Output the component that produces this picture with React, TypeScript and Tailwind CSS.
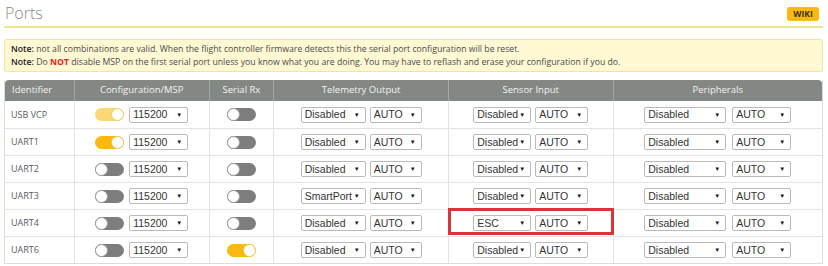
import React from "react";

const SANS = "font-['Open_Sans',sans-serif]";
const ARIAL = "font-['Liberation_Sans',Arial,sans-serif]";

type Row = {
  id: string;
  msp: "on" | "off" | "locked";
  rx: boolean;
  telemetry: string;
  sensor: string;
  highlight?: boolean;
};

const ROWS: Row[] = [
  { id: "USB VCP", msp: "locked", rx: false, telemetry: "Disabled", sensor: "Disabled" },
  { id: "UART1", msp: "on", rx: false, telemetry: "Disabled", sensor: "Disabled" },
  { id: "UART2", msp: "off", rx: false, telemetry: "Disabled", sensor: "Disabled" },
  { id: "UART3", msp: "off", rx: false, telemetry: "SmartPort", sensor: "Disabled" },
  { id: "UART4", msp: "off", rx: false, telemetry: "Disabled", sensor: "ESC", highlight: true },
  { id: "UART6", msp: "off", rx: true, telemetry: "Disabled", sensor: "Disabled" },
];

function Toggle({ state }: { state: "on" | "off" | "locked" }) {
  if (state === "off") {
    return (
      <div className="relative h-[13px] w-[29px] shrink-0 rounded-full bg-[#7d7d7d]">
        <div className="absolute left-0 top-0 h-[13px] w-[13px] rounded-full border border-[#9a9a9a] bg-white" />
      </div>
    );
  }
  return (
    <div
      className={`relative h-[13px] w-[29px] shrink-0 rounded-full ${
        state === "on" ? "bg-[#fbb80f]" : "bg-[#fbd873]"
      }`}
    >
      <div className="absolute right-0 top-0 h-[13px] w-[13px] rounded-full border border-[#f0c860] bg-white" />
    </div>
  );
}

function Select({ value, w }: { value: string; w: string }) {
  return (
    <div
      className={`${w} ${ARIAL} flex h-[16px] shrink-0 items-center justify-between rounded-[2px] border border-[#b9b9b9] bg-white pl-[3px] pr-[5px] text-[10.5px] leading-none text-[#333]`}
    >
      <span>{value}</span>
      <span className="text-[6px] text-[#111]">▼</span>
    </div>
  );
}

const COLS = [
  "w-[69px]",
  "w-[135px]",
  "w-[65px]",
  "w-[175px]",
  "w-[165px]",
  "w-[210px]",
];
const HEADERS = [
  "Identifier",
  "Configuration/MSP",
  "Serial Rx",
  "Telemetry Output",
  "Sensor Input",
  "Peripherals",
];

export default function App() {
  return (
    <div className={`${SANS} h-[266px] w-[828px] overflow-hidden bg-white pl-[4px] pr-[5px]`}>
      <div className="flex h-[28px] items-start justify-between border-b-2 border-[#f7e08e]">
        <h1 className="pl-[1px] pt-[1px] text-[16px] font-light leading-[24px] text-[#8a8a8a]">Ports</h1>
        <div className="mr-[4px] mt-[7px] flex h-[14px] w-[32px] items-center justify-center rounded-[3px] bg-[#fbb80f] text-[8.5px] font-bold text-[#3a3020]">
          WIKI
        </div>
      </div>

      <div className="mt-[11px] h-[33px] rounded-[3px] border border-[#f1e3a6] bg-[#fff8d3] px-[6px] pt-[3px] text-[8.7px] leading-[13px] text-[#4a4a4a]">
        <p>
          <b className="font-semibold text-[#222]">Note:</b> not all combinations are valid. When the flight controller firmware detects this the serial port configuration will be reset.
        </p>
        <p>
          <b className="font-semibold text-[#222]">Note:</b> Do <b className="font-bold text-[#e22]">NOT</b> disable MSP on the first serial port unless you know what you are doing. You may have to reflash and erase your configuration if you do.
        </p>
      </div>

      <div className="mt-[8px] border-x border-b border-[#dcdcdc]">
        <div className="flex h-[21px] rounded-t-[4px] bg-[#838885] text-[9.5px] text-[#f2f2f2]">
          {HEADERS.map((h, i) => (
            <div
              key={h}
              className={`${COLS[i]} flex items-center ${
                i === 0 ? "pl-[7px]" : "justify-center border-l border-[#a2a6a4]"
              }`}
            >
              {h}
            </div>
          ))}
        </div>
        {ROWS.map((r, idx) => (
          <div
            key={r.id}
            className={`flex h-[27px] ${idx > 0 ? "border-t border-[#e3e3e3]" : ""}`}
          >
            <div className={`${COLS[0]} flex items-center pl-[6px] text-[9px] text-[#5a5a5a]`}>{r.id}</div>
            <div className={`${COLS[1]} flex items-center justify-center gap-[5px] border-l border-[#e3e3e3]`}>
              <Toggle state={r.msp} />
              <Select value="115200" w="w-[59px]" />
            </div>
            <div className={`${COLS[2]} flex items-center justify-center border-l border-[#e3e3e3]`}>
              <Toggle state={r.rx ? "on" : "off"} />
            </div>
            <div className={`${COLS[3]} flex items-center justify-center gap-[4px] border-l border-[#e3e3e3]`}>
              <Select value={r.telemetry} w="w-[65px]" />
              <Select value="AUTO" w="w-[52px]" />
            </div>
            <div className={`${COLS[4]} relative flex items-center justify-center gap-[4px] border-l border-[#e3e3e3]`}>
              <Select value={r.sensor} w="w-[58px]" />
              <Select value="AUTO" w="w-[53px]" />
              {r.highlight && (
                <div className="absolute inset-x-[-1px] bottom-[1px] top-[-2px] border-[3px] border-[#d8353b]" />
              )}
            </div>
            <div className={`${COLS[5]} flex items-center justify-center gap-[6px] border-l border-[#e3e3e3]`}>
              <Select value="Disabled" w="w-[82px]" />
              <Select value="AUTO" w="w-[59px]" />
            </div>
          </div>
        ))}
      </div>
    </div>
  );
}
